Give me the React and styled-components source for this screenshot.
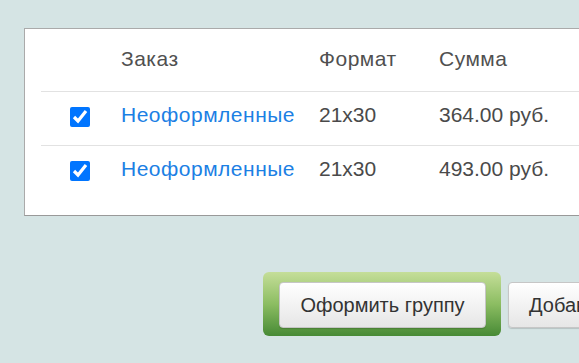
import React from 'react';
import styled, { createGlobalStyle } from 'styled-components';

const GlobalStyle = createGlobalStyle`
    html, body {
        margin: 0;
        padding: 0;
        background: #d5e4e4;
        overflow: hidden;
    }
    body {
        font-family: "Liberation Sans", Arial, sans-serif;
    }
`;

const Page = styled.div`
    padding: 28px 0 0 24px;
    width: 700px;
`;

const Panel = styled.div`
    background: #fff;
    border: 1px solid #aaa;
    border-bottom-color: #999;
    padding: 0 0 16px 16px;
    width: 640px;
`;

const Table = styled.table`
    border-collapse: collapse;
    width: 100%;
    font-size: 21px;
    line-height: 24px;
    color: #4a4a4a;
`;

const HeadCell = styled.th`
    text-align: left;
    font-weight: normal;
    padding: 18px 0 20px 0;
    width: ${p => p.$w || 'auto'};
    color: #505050;
    letter-spacing: 0.5px;
`;

const Cell = styled.td`
    border-top: 1px solid #e2e2e2;
    padding: 11px 0 18px 0;
    vertical-align: top;
`;

const Check = styled.input`
    width: 20px;
    height: 20px;
    margin: 4px 0 0 29px;
    display: block;
`;

const OrderLink = styled.a`
    color: #1b80e4;
    text-decoration: none;
    letter-spacing: 0.5px;
`;

const Actions = styled.div`
    display: flex;
    align-items: flex-start;
    gap: 7px;
    margin-top: 56px;
    padding-left: 239px;
`;

const Highlight = styled.div`
    flex-shrink: 0;
    padding: 10px 15px 8px 16px;
    border-radius: 6px;
    background: linear-gradient(to bottom, #c5de99 0%, #8cbd62 50%, #478a35 100%);
`;

const Button = styled.button`
    flex-shrink: 0;
    height: 46px;
    padding: 0 20px;
    margin-top: ${p => (p.$offset ? '10px' : '0')};
    font-family: "Liberation Sans", Arial, sans-serif;
    font-size: 20px;
    color: #333;
    white-space: nowrap;
    background: linear-gradient(to bottom, #ffffff 0%, #e6e6e6 100%);
    border: 1px solid #c6c6c6;
    border-radius: 4px;
    box-shadow: 0 1px 1px rgba(0, 0, 0, 0.15);
    width: ${p => p.$w || 'auto'};
`;

const rows = [
    { id: 1, format: '21x30', sum: '364.00 руб.' },
    { id: 2, format: '21x30', sum: '493.00 руб.' },
];

function App() {
    return (
        <Page>
            <GlobalStyle />
            <Panel>
                <Table>
                    <thead>
                        <tr>
                            <HeadCell $w="80px"></HeadCell>
                            <HeadCell $w="198px">Заказ</HeadCell>
                            <HeadCell $w="120px">Формат</HeadCell>
                            <HeadCell>Сумма</HeadCell>
                        </tr>
                    </thead>
                    <tbody>
                        {rows.map(r => (
                            <tr key={r.id}>
                                <Cell><Check type="checkbox" defaultChecked /></Cell>
                                <Cell><OrderLink href="#">Неоформленные</OrderLink></Cell>
                                <Cell>{r.format}</Cell>
                                <Cell>{r.sum}</Cell>
                            </tr>
                        ))}
                    </tbody>
                </Table>
            </Panel>
            <Actions>
                <Highlight>
                    <Button $w="207px">Оформить группу</Button>
                </Highlight>
                <Button $offset>Добавить в корзину</Button>
            </Actions>
        </Page>
    );
}

export default App;
